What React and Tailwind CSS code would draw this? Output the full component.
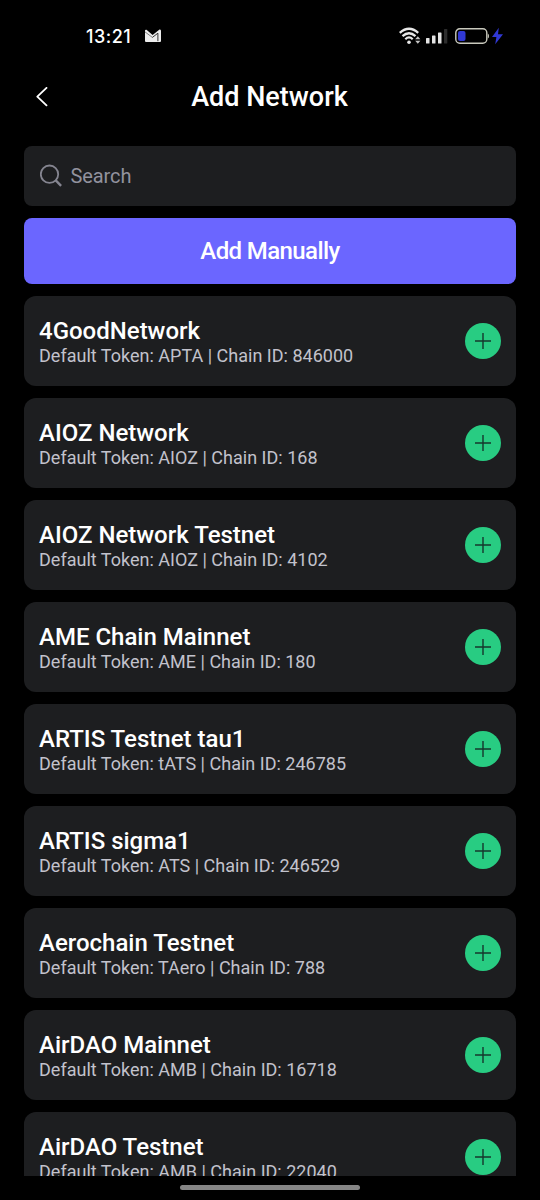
const networks = [
  { name: "4GoodNetwork", token: "APTA", chain: 846000 },
  { name: "AIOZ Network", token: "AIOZ", chain: 168 },
  { name: "AIOZ Network Testnet", token: "AIOZ", chain: 4102 },
  { name: "AME Chain Mainnet", token: "AME", chain: 180 },
  { name: "ARTIS Testnet tau1", token: "tATS", chain: 246785 },
  { name: "ARTIS sigma1", token: "ATS", chain: 246529 },
  { name: "Aerochain Testnet", token: "TAero", chain: 788 },
  { name: "AirDAO Mainnet", token: "AMB", chain: 16718 },
  { name: "AirDAO Testnet", token: "AMB", chain: 22040 },
];

function MailIcon() {
  return (
    <svg className="ml-[14px] h-[14px] w-4" viewBox="0 0 16 14">
      <path d="M0 1.6Q.2 .4 1.5 .8L7.6 6 14.5 .6Q15.8 .4 16 1.8V12Q16 13 15 13H1Q0 13 0 12Z" fill="#ececec" />
      <path d="M0 2.9 7.4 8.4" fill="none" stroke="#555" strokeWidth=".7" />
      <path d="M7.4 8.4 12.9 4.2V12.2" fill="none" stroke="#222" strokeWidth=".9" />
    </svg>
  );
}

function WifiIcon() {
  return (
    <svg className="h-[18px] w-[23px]" viewBox="0 0 23 18" fill="none" stroke="#e8e8e8">
      <path d="M.8 5.8Q10 -2.4 19.2 5.8" strokeWidth="2.4" />
      <path d="M3.5 9.1Q10 3.3 16.5 9.1" strokeWidth="2.3" />
      <path d="M6.3 12.2Q10 8.7 13.7 12.2" strokeWidth="2.2" />
      <circle cx="10" cy="15.2" r="1.8" fill="#e8e8e8" stroke="none" />
      <path d="M16.2 12.2 18.8 9.2 21.4 12.2ZM16.2 13.8 18.8 16.8 21.4 13.8Z" fill="#c4c4c4" stroke="none" />
    </svg>
  );
}

function SignalIcon() {
  return (
    <svg className="ml-1 h-4 w-[22px]" viewBox="0 0 22 16" fill="#e4e4e4">
      <rect x="0" y="10" width="3.5" height="5.5" rx=".6" />
      <rect x="6" y="7.5" width="3.5" height="8" rx=".6" />
      <rect x="12" y="4.5" width="3.5" height="11" rx=".6" />
      <rect x="18" y="1" width="3.3" height="14.5" rx=".6" fill="#2c2c2c" />
    </svg>
  );
}

function BatteryIcon() {
  return (
    <svg className="ml-[7px] h-[18px] w-[49px]" viewBox="0 0 49 18">
      <rect x=".8" y="1.8" width="31" height="14.4" rx="4" fill="none" stroke="#c9c9bd" strokeWidth="1.4" />
      <rect x="3" y="4" width="7.5" height="10" rx="2" fill="#3038d4" />
      <path d="M32.8 6.5Q34 7 34 9T32.8 11.5Z" fill="#c9c9bd" />
      <path d="M43.8 .8 37 10H41.4L40.2 17.2 48 7.3H43Z" fill="#3038d4" />
    </svg>
  );
}

function StatusBar() {
  return (
    <div className="flex h-[72px] shrink-0 items-center pr-[36px] pl-[86px]">
      <span className="pt-px font-[Inter,sans-serif] text-[18px] leading-6 font-medium tracking-[0.5px]">13:21</span>
      <MailIcon />
      <div className="ml-auto flex items-center">
        <WifiIcon />
        <SignalIcon />
        <BatteryIcon />
      </div>
    </div>
  );
}

function NetworkCard({ name, token, chain }) {
  return (
    <li className="flex h-[90px] shrink-0 items-center justify-between rounded-xl bg-[#1d1e20] px-[15px]">
      <div>
        <h2 className="text-[24px] leading-7 font-medium text-white">{name}</h2>
        <p className="text-[18px] leading-[21px] tracking-[0.012px] text-[#c2c2cc]">
          Default Token: {token} | Chain ID: {chain}
        </p>
      </div>
      <button aria-label={`Add ${name}`} className="flex size-9 items-center justify-center rounded-full bg-[#28cc82]">
        <svg className="size-4" viewBox="0 0 16 16" fill="none" stroke="#16372d" strokeWidth="1.4">
          <path d="M8 0V16M0 8H16" />
        </svg>
      </button>
    </li>
  );
}

export default function App() {
  return (
    <div className="flex h-[1200px] w-[540px] flex-col overflow-hidden bg-black font-[Roboto,sans-serif] text-white">
      <StatusBar />
      <header className="grid h-[50px] shrink-0 grid-cols-[84px_1fr_84px] items-center">
        <button aria-label="Back" className="ml-[36px] w-3">
          <svg className="h-5 w-3" viewBox="0 0 12 20" fill="none" stroke="#fff" strokeWidth="1.8" strokeLinecap="round" strokeLinejoin="round">
            <path d="M10.5 .9 1.3 9.6 10.5 18.4" />
          </svg>
        </button>
        <h1 className="pr-px text-center text-[27px] leading-8 font-medium">Add Network</h1>
      </header>
      <main className="mt-6 flex h-[1030px] shrink-0 flex-col gap-3 overflow-hidden px-6">
        <label className="flex h-[60px] shrink-0 items-center rounded-lg bg-[#1d1e20] pl-4">
          <svg className="size-6" viewBox="0 0 24 24" fill="none" stroke="#858590" strokeWidth="1.8">
            <circle cx="9.5" cy="10.2" r="8.7" />
            <path d="M15.5 16.2 21.1 21.8" strokeWidth="2.4" />
          </svg>
          <span className="ml-[6.5px] text-[20px] leading-6 tracking-[-0.1px] text-[#92929e]">Search</span>
        </label>
        <button className="h-[66px] shrink-0 rounded-lg bg-[#6b66ff] text-[24px] leading-7 font-medium tracking-[-0.6px]">
          Add Manually
        </button>
        <ul className="flex flex-col gap-3">
          {networks.map((network) => (
            <NetworkCard key={network.name} {...network} />
          ))}
        </ul>
      </main>
      <footer className="flex h-6 shrink-0 items-start justify-center pt-[9px]">
        <div className="h-[5px] w-[180px] rounded-full bg-[#858585]" />
      </footer>
    </div>
  );
}
